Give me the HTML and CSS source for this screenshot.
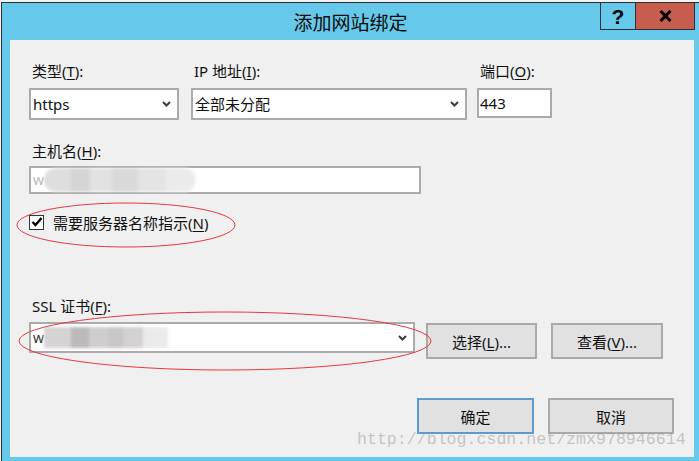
FILE: index.html
```html
<!DOCTYPE html>
<html lang="zh-CN">
<head>
<meta charset="utf-8">
<title>添加网站绑定</title>
<link rel="stylesheet" href="styles.css">
</head>
<body>
<div class="window">
  <div class="titlebar">
    <div></div>
    <div class="title">添加网站绑定</div>
    <div class="controls">
      <span class="help">?</span>
      <span class="close"><svg width="13" height="12" viewBox="0 0 13 12"><path d="M1.5 1L11.5 11M11.5 1L1.5 11" stroke="#000" stroke-width="3" fill="none"/></svg></span>
    </div>
  </div>
  <div class="content">
    <div class="row1">
      <div class="field f-type">
        <label class="lbl">类型(<u>T</u>):</label>
        <div class="select s-type"><span>https</span><svg class="chev" width="9" height="6" viewBox="0 0 9 6"><path d="M1 1l3.5 3.5L8 1" fill="none" stroke="#3c3c3c" stroke-width="2"/></svg></div>
      </div>
      <div class="field f-ip">
        <label class="lbl">IP 地址(<u>I</u>):</label>
        <div class="select s-ip"><span>全部未分配</span><svg class="chev" width="9" height="6" viewBox="0 0 9 6"><path d="M1 1l3.5 3.5L8 1" fill="none" stroke="#3c3c3c" stroke-width="2"/></svg></div>
      </div>
      <div class="field f-port">
        <label class="lbl">端口(<u>O</u>):</label>
        <div class="input i-port">443</div>
      </div>
    </div>
    <div class="field f-host">
      <label class="lbl">主机名(<u>H</u>):</label>
      <div class="input i-host"><span class="w w-host">w</span><span class="redact r-host"></span></div>
    </div>
    <div class="check">
      <span class="box"><svg width="12" height="12" viewBox="0 0 12 12"><path d="M1.5 6l3 3 6-7" fill="none" stroke="#000" stroke-width="2.4"/></svg></span>
      <span>需要服务器名称指示(<u>N</u>)</span>
    </div>
    <label class="lbl l-ssl">SSL 证书(<u>F</u>):</label>
    <div class="ssl-row">
      <div class="select s-ssl"><span class="sslval"><span class="w">w</span><span class="redact r-ssl"></span></span><svg class="chev" width="9" height="6" viewBox="0 0 9 6"><path d="M1 1l3.5 3.5L8 1" fill="none" stroke="#3c3c3c" stroke-width="2"/></svg></div>
      <button class="btn b-sel">选择(<u>L</u>)...</button>
      <button class="btn b-view">查看(<u>V</u>)...</button>
    </div>
    <div class="actions">
      <button class="btn b-ok">确定</button>
      <button class="btn b-cancel">取消</button>
    </div>
  </div>
</div>
<svg class="annot" width="699" height="461" viewBox="0 0 699 461">
  <ellipse cx="126" cy="225" rx="109" ry="22" fill="none" stroke="#e53a3a" stroke-width="1"/>
  <ellipse cx="225" cy="341" rx="206" ry="29" fill="none" stroke="#e53a3a" stroke-width="1"/>
</svg>
<div class="watermark">http://blog.csdn.net/zmx978946614</div>
</body>
</html>
```
FILE: styles.css
```css
* { box-sizing: border-box; }
html, body { margin: 0; padding: 0; }
body {
  background: #f3f3f3;
  font-family: "Noto Sans", "Noto Sans CJK SC", sans-serif;
  color: #1a1a1a;
  width: 699px;
  height: 461px;
  overflow: hidden;
}
.window {
  margin: 2px 0 0 1px;
  width: 698px;
  height: 459px;
  border-top: 1px solid #2f2f2f;
  border-left: 1px solid #2f2f2f;
  background: #66c9eb;
  padding: 0 5px 4px 8px;
  display: flex;
  flex-direction: column;
}
.titlebar {
  height: 37px;
  flex: none;
  margin: 0 -5px 0 -8px;
  display: grid;
  grid-template-columns: 1fr auto 1fr;
  align-items: center;
}
.title {
  font-family: "Noto Sans CJK SC", sans-serif;
  font-size: 19px;
  line-height: 22px;
  color: #0a0a0a;
  padding-top: 1px;
}
.controls {
  justify-self: end;
  align-self: start;
  display: flex;
  height: 27px;
  margin-right: 4px;
  border: 1px solid #2f2f2f;
  border-top: 0;
}
.help {
  width: 34px;
  display: flex;
  align-items: center;
  justify-content: center;
  font: bold 21px/1 "Liberation Sans", sans-serif;
  color: #000;
}
.close {
  width: 59px;
  background: #c65d4f;
  border-left: 1px solid #2f2f2f;
  display: flex;
  align-items: center;
  justify-content: center;
}
.content {
  flex: 1;
  background: #f0f0f0;
  padding: 22px 0 0 19px;
  font-size: 15px;
  color: #111;
}
u { text-decoration: underline; text-underline-offset: 2px; }
.lbl {
  display: block;
  height: 18px;
  line-height: 18px;
  padding-left: 3px;
  margin-bottom: 8px;
  white-space: nowrap;
}
.row1 { display: flex; align-items: flex-start; }
.f-ip { margin-left: 12px; }
.f-port { margin-left: 10px; }
.select, .input {
  background: #fff;
  border: 2px solid #ababab;
  display: flex;
  align-items: center;
  padding: 0 6px 0 2px;
  line-height: 20px;
  color: #111;
}
.select { justify-content: space-between; }
.s-type { width: 150px; height: 32px; }
.s-ip { width: 276px; height: 32px; }
.i-port { width: 75px; height: 30px; padding-left: 1px; }
.f-host { margin-top: 22px; }
.f-host .lbl { margin-bottom: 6px; }
.i-host { width: 392px; height: 28px; padding-left: 2px; }
.w { color: #333; font-size: 14px; }
.w-host { color: #bbb; }
.redact { display: inline-block; filter: blur(1.5px); }
.r-host {
  width: 152px;
  height: 24px;
  border-radius: 12px;
  background: linear-gradient(to right, #dedede 0 18%, #d6d6d6 18% 30%, #e2e2e2 30% 45%, #dadada 45% 62%, #e4e4e4 62% 80%, #ececec 80%);
}
.check {
  margin-top: 18px;
  height: 20px;
  display: flex;
  align-items: center;
  gap: 9px;
}
.box {
  width: 15px;
  height: 15px;
  border: 1px solid #333;
  background: #fff;
  display: flex;
  align-items: center;
  justify-content: center;
}
.l-ssl { margin-top: 65px; margin-bottom: 7px; }
.ssl-row { display: flex; align-items: flex-start; }
.s-ssl { width: 386px; height: 31px; padding-left: 2px; }
.sslval { display: flex; align-items: center; }
.r-ssl {
  width: 124px;
  height: 21px;
  background: linear-gradient(to right, #d6d3d3 0 22%, #bdb9bb 22% 36%, #d0cdcd 36% 52%, #c9c6c7 52% 64%, #d4d1d1 64% 80%, #ebebeb 80%);
}
.btn {
  font-family: "Noto Sans", "Noto Sans CJK SC", sans-serif;
  font-size: 15px;
  color: #111;
  background: #e1e1e1;
  border: 2px solid #a9a9a9;
  height: 36px;
  padding: 0;
}
.b-sel { width: 111px; margin: 1px 0 0 11px; }
.b-view { width: 112px; margin: 1px 0 0 14px; }
.actions { display: flex; margin: 39px 0 0 388px; gap: 14px; }
.b-ok { width: 117px; border-color: #5c9bd1; }
.b-cancel { width: 126px; }
.annot { position: absolute; left: 0; top: 0; pointer-events: none; }
.watermark {
  position: absolute;
  left: 357px;
  top: 430px;
  font-family: "Liberation Mono", monospace;
  font-size: 16.6px;
  line-height: 20px;
  color: rgba(150, 150, 150, 0.5);
  white-space: nowrap;
}
```
